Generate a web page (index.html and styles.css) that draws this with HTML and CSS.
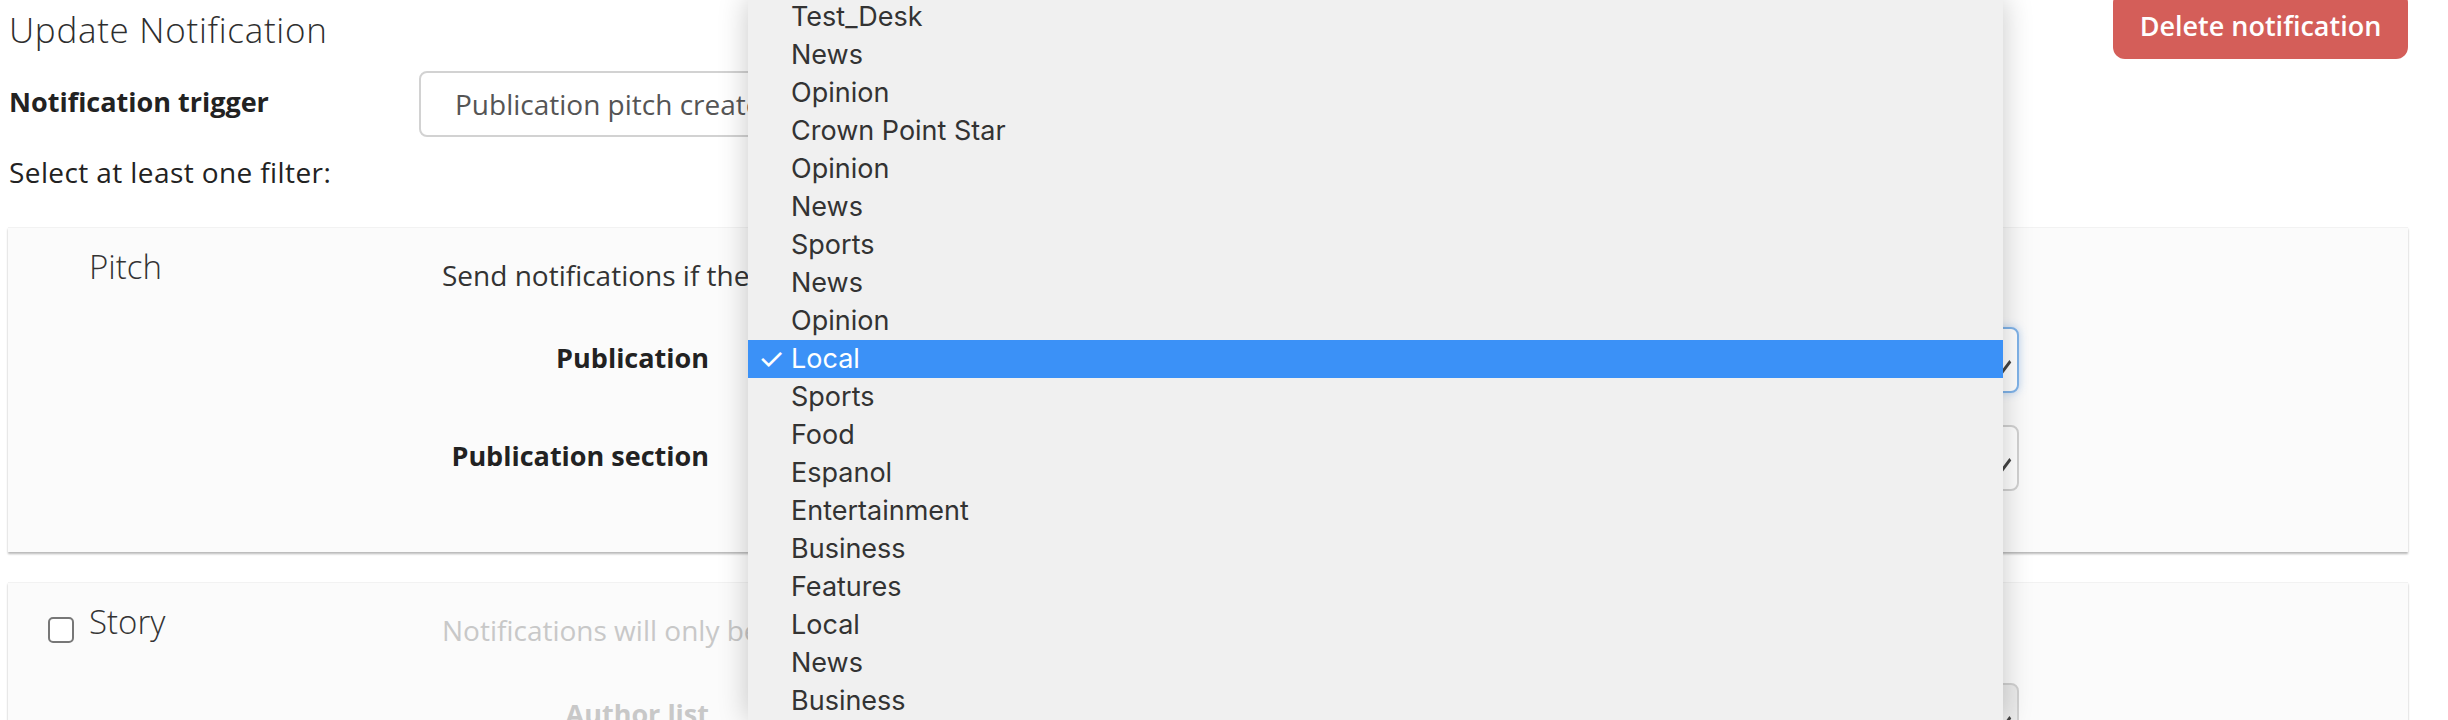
FILE: index.html
```html
<!DOCTYPE html>
<html lang="en">
<head>
  <meta charset="UTF-8" />
  <meta name="viewport" content="width=device-width, initial-scale=1.0"/>
  <title>Update Notification</title>
  <link rel="stylesheet" href="styles.css">
</head>
<body>

<div class="page">

  <div class="header">
    <h1>Update Notification</h1>
    <button class="btn-delete">Delete notification</button>
  </div>

  <div class="trigger-row">
    <label class="trigger-label">Notification trigger</label>
    <div class="select trigger-select">Publication pitch created</div>
  </div>

  <p class="hint">Select at least one filter:</p>

  <div class="filter-card">
    <div class="filter-title">
      <span class="box-space"></span>
      <span>Pitch</span>
    </div>
    <div class="filter-body">
      <p class="filter-note">Send notifications if the pitch matches all of the following:</p>
      <div class="form-row">
        <label>Publication</label>
        <div class="select focused">Local<span class="chev"></span></div>
      </div>
      <div class="form-row">
        <label>Publication section</label>
        <div class="select">Select a section<span class="chev"></span></div>
      </div>
    </div>
  </div>

  <div class="filter-card off">
    <div class="filter-title">
      <input type="checkbox" class="check">
      <span>Story</span>
    </div>
    <div class="filter-body">
      <p class="filter-note">Notifications will only be sent if the story matches all of the following:</p>
      <div class="form-row">
        <label>Author list</label>
        <div class="select disabled">Select an author list<span class="chev"></span></div>
      </div>
    </div>
  </div>

  <!-- native select popup, open over the page -->
  <ul class="menu">
    <li>Test_Desk</li>
    <li>News</li>
    <li>Opinion</li>
    <li>Crown Point Star</li>
    <li>Opinion</li>
    <li>News</li>
    <li>Sports</li>
    <li>News</li>
    <li>Opinion</li>
    <li class="picked">Local</li>
    <li>Sports</li>
    <li>Food</li>
    <li>Espanol</li>
    <li>Entertainment</li>
    <li>Business</li>
    <li>Features</li>
    <li>Local</li>
    <li>News</li>
    <li>Business</li>
  </ul>

</div>

</body>
</html>
```

FILE: styles.css
```css
html, body {
  margin: 0;
  height: 100%;
  overflow: hidden;
}

body {
  font-family: "Open Sans", "Liberation Sans", sans-serif;
  color: #333;
  background: #fff;
}

.page {
  position: relative;
  width: 2400px;
  padding-left: 8px;
}

.header {
  display: flex;
  justify-content: space-between;
  align-items: flex-start;
}

h1 {
  margin: 10px 0 0 1px;
  font-size: 35px;
  font-weight: 300;
  line-height: 40px;
  letter-spacing: 0.7px;
  color: #2e2e2e;
}

.btn-delete {
  margin-top: -9px;
  width: 295px;
  height: 68px;
  border: none;
  border-radius: 12px;
  background: #d45e59;
  color: #fff;
  font-family: inherit;
  font-size: 27px;
  font-weight: 600;
}

.trigger-row {
  display: flex;
  align-items: center;
  margin-top: 12px;
}

.trigger-label {
  width: 410px;
  padding: 0 0 5px 1px;
  font-size: 27px;
  font-weight: 700;
  color: #222;
}

.select {
  position: relative;
  box-sizing: border-box;
  height: 66px;
  padding: 0 34px;
  border: 2px solid #d2d2d2;
  border-radius: 8px;
  background: #fff;
  font-size: 28px;
  line-height: 62px;
  color: #555;
}

.trigger-select {
  width: 780px;
}

.select.focused {
  border-color: #80b4ea;
  box-shadow: 0 0 8px rgba(74, 144, 226, 0.35);
}

.select.disabled {
  background: #ececec;
  color: #aaa;
}

.chev {
  position: absolute;
  right: 8px;
  top: 23px;
  width: 18px;
  height: 18px;
  border-right: 3px solid #444;
  border-bottom: 3px solid #444;
  transform: rotate(45deg) skew(8deg, 8deg);
  transform-origin: center;
}

.hint {
  margin: 16px 0 0 1px;
  font-size: 28px;
  line-height: 38px;
  letter-spacing: 0.4px;
  color: #222;
}

.filter-card {
  display: flex;
  margin-top: 36px;
  padding: 0 40px 61px;
  background: #fbfbfb;
  border-top: 1px solid #f2f2f2;
  box-shadow: 0 2px 2px rgba(0, 0, 0, 0.28);
}

.filter-card.off {
  margin-top: 30px;
}

.filter-title {
  display: flex;
  align-items: flex-start;
  width: 394px;
  padding-top: 20px;
  font-size: 33px;
  font-weight: 300;
  line-height: 38px;
  color: #333;
}

.box-space,
.check {
  flex: none;
  width: 26px;
  height: 26px;
  margin: 14px 15px 0 0;
}

.check {
  appearance: none;
  box-sizing: border-box;
  border: 2px solid #777;
  border-radius: 5px;
  background: #fff;
}

.filter-body {
  width: 1577px;
  padding-top: 28px;
}

.filter-note {
  margin: 0 0 33px;
  font-size: 28px;
  font-weight: 500;
  line-height: 38px;
  color: #333;
  white-space: nowrap;
}

.off .filter-note {
  color: #c8c8c8;
  margin-bottom: 34px;
}

.form-row {
  display: flex;
  align-items: center;
  margin-bottom: 32px;
}

.form-row:last-child {
  margin-bottom: 0;
}

.form-row label {
  display: flex;
  justify-content: flex-end;
  flex: 0 0 267px;
  margin-right: 51px;
  padding-bottom: 5px;
  white-space: nowrap;
  font-size: 27px;
  font-weight: 700;
  color: #222;
}

.off .form-row label {
  color: #c8c8c8;
}

.form-row .select {
  flex: 1;
}

.menu {
  position: absolute;
  top: -2px;
  left: 748px;
  width: 1255px;
  margin: 0;
  padding: 0;
  list-style: none;
  background: #f0f0f0;
  box-shadow: 0 0 28px rgba(0, 0, 0, 0.22);
  font-family: Inter, "Open Sans", sans-serif;
  font-size: 27px;
  color: #333;
}

.menu li {
  position: relative;
  height: 38px;
  padding-left: 43px;
  line-height: 38px;
}

.menu li.picked {
  background: #3b91f7;
  color: #fff;
}

.menu li.picked::before {
  content: "\2713";
  position: absolute;
  left: 10px;
  font-size: 30px;
}
```
